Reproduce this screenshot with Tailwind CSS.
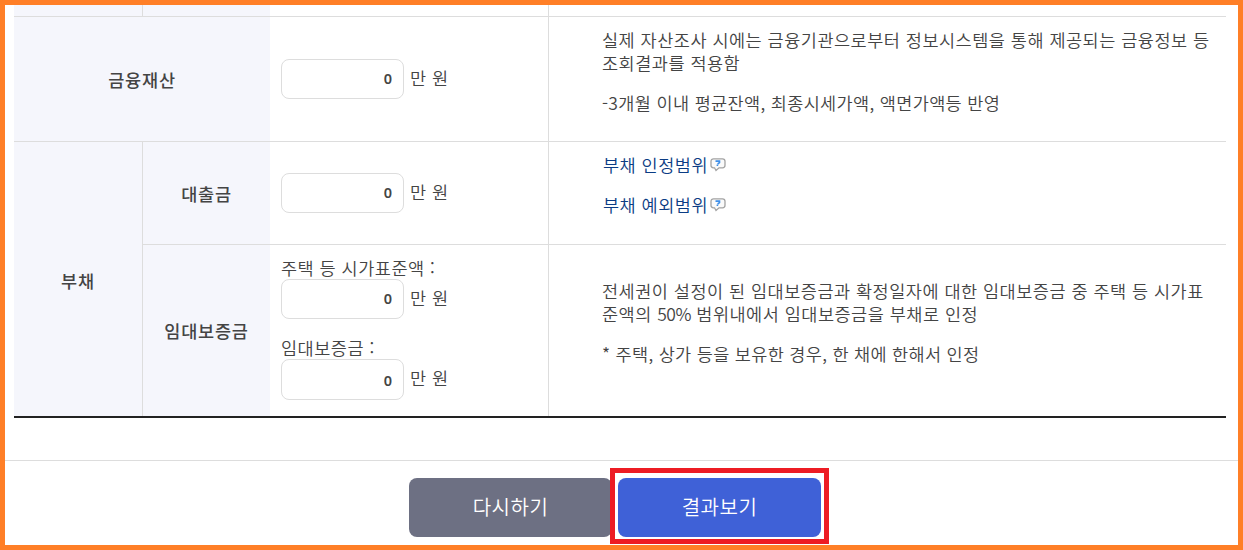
<!DOCTYPE html>
<html lang="ko">
<head>
    <meta charset="UTF-8">
    <meta name="viewport" content="width=device-width, initial-scale=1.0">
    <title>모의계산</title>
    <script src="https://cdn.jsdelivr.net/npm/@tailwindcss/browser@4"></script>
</head>
<body class="h-[550px] overflow-hidden border-5 border-[#ff7f27] bg-white font-['Noto_Sans_CJK_KR',sans-serif] text-[17.5px] leading-[23px] font-[350] tracking-[0.5px] text-[#444]">
    <!-- 재산 입력 표 -->
    <div class="ml-[9px] grid w-[1212px] grid-cols-[129px_127px_279px_677px] grid-rows-[12px_125px_103px_171px] border-b-2 border-[#222] whitespace-nowrap">
        <div class="border-r border-b border-[#ddd] bg-[#f5f6fc]"></div>
        <div class="border-b border-[#ddd] bg-[#f5f6fc]"></div>
        <div class="border-r border-b border-[#ddd]"></div>
        <div class="border-b border-[#ddd]"></div>

        <!-- 금융재산 -->
        <div class="col-span-2 flex items-center justify-center border-b border-[#ddd] bg-[#f5f6fc] font-medium tracking-[0.8px]">금융재산</div>
        <div class="flex items-center border-r border-b border-[#ddd] pl-[11px]">
            <input type="text" value="0" class="h-10 w-[123px] rounded-lg border border-[#ddd] pr-[11px] pb-0.5 text-right font-['Noto_Sans'] text-[14.5px] font-semibold tracking-normal">
            <span class="-mt-1 ml-1.5">만 원</span>
        </div>
        <div class="border-b border-[#ddd] pt-[11px] pl-[53px]">
            <p>실제 자산조사 시에는 금융기관으로부터 정보시스템을 통해 제공되는 금융정보 등<br>조회결과를 적용함</p>
            <p class="mt-[17px] tracking-[0.35px]">-3개월 이내 평균잔액, 최종시세가액, 액면가액등 반영</p>
        </div>

        <!-- 부채 -->
        <div class="row-span-2 flex items-center justify-center border-r border-[#ddd] bg-[#f5f6fc] pt-0.5 font-medium tracking-[0.8px]">부채</div>
        <div class="flex items-center justify-center border-b border-[#ddd] bg-[#f5f6fc] font-medium tracking-[0.8px]">대출금</div>
        <div class="flex items-center border-r border-b border-[#ddd] pl-[11px]">
            <input type="text" value="0" class="h-10 w-[123px] rounded-lg border border-[#ddd] pr-[11px] pb-0.5 text-right font-['Noto_Sans'] text-[14.5px] font-semibold tracking-normal">
            <span class="-mt-1 ml-1.5">만 원</span>
        </div>
        <div class="border-b border-[#ddd] pt-[11px] pl-[54px] text-[#0b3c84]">
            <p class="flex">부채 인정범위
                <svg class="mt-[5px] ml-0.5" width="16" height="14" viewBox="0 0 16 14" fill="none">
                    <path d="M3.500.8h9a2.500 2.500 0 0 1 2.500 2.500v4a2.500 2.500 0 0 1-2.500 2.500H9L6 12.500 4.500 9.800h-1A2.500 2.500 0 0 1 1 7.300v-4A2.500 2.500 0 0 1 3.500.8z" fill="#fafafa" stroke="#a3a3a3" stroke-width="1.300"/>
                    <path d="M5.500 3.100h4v1.600L7.600 6M7.400 6.600v1.500" stroke="#3f8fe8" stroke-width="1.600"/>
                </svg>
            </p>
            <p class="mt-[17px] flex">부채 예외범위
                <svg class="mt-[5px] ml-0.5" width="16" height="14" viewBox="0 0 16 14" fill="none">
                    <path d="M3.500.8h9a2.500 2.500 0 0 1 2.500 2.500v4a2.500 2.500 0 0 1-2.500 2.500H9L6 12.500 4.500 9.800h-1A2.500 2.500 0 0 1 1 7.300v-4A2.500 2.500 0 0 1 3.500.8z" fill="#fafafa" stroke="#a3a3a3" stroke-width="1.300"/>
                    <path d="M5.500 3.100h4v1.600L7.600 6M7.400 6.600v1.500" stroke="#3f8fe8" stroke-width="1.600"/>
                </svg>
            </p>
        </div>

        <!-- 임대보증금 -->
        <div class="flex items-center justify-center bg-[#f5f6fc] font-medium tracking-[0.8px]">임대보증금</div>
        <div class="border-r border-[#ddd] pt-[11px] pl-[11px]">
            <p>주택 등 시가표준액 :</p>
            <div class="flex items-center">
                <input type="text" value="0" class="h-10 w-[123px] rounded-lg border border-[#ddd] pr-[11px] pb-0.5 text-right font-['Noto_Sans'] text-[14.5px] font-semibold tracking-normal">
                <span class="-mt-1 ml-1.5">만 원</span>
            </div>
            <p class="mt-[17px]">임대보증금 :</p>
            <div class="flex items-center">
                <input type="text" value="0" class="h-[41px] w-[123px] rounded-lg border border-[#ddd] pr-[11px] text-right font-['Noto_Sans'] text-[14.5px] font-semibold tracking-normal">
                <span class="-mt-1 ml-1.5">만 원</span>
            </div>
        </div>
        <div class="pt-[34px] pl-[53px]">
            <p>전세권이 설정이 된 임대보증금과 확정일자에 대한 임대보증금 중 주택 등 시가표<br>준액의 <span class="tracking-[-0.5px]">50%</span> 범위내에서 임대보증금을 부채로 인정</p>
            <p class="mt-[17px] tracking-[0.32px]">* 주택, 상가 등을 보유한 경우, 한 채에 한해서 인정</p>
        </div>
    </div>

    <!-- 버튼 -->
    <div class="mt-[42px] flex border-t border-[#ddd] pt-[7px] pl-[404px] text-[20px] text-white">
        <button class="mt-2.5 h-[59px] w-[203px] rounded-lg bg-[#6d7083] pb-0.5">다시하기</button>
        <div class="relative -ml-0.5 h-[76px] w-[219px] border-5 border-[#ed1c24] bg-white p-[3px] pt-[5px]">
            <button class="h-[59px] w-[203px] rounded-lg bg-[#3f61d7] pb-0.5">결과보기</button>
        </div>
    </div>
</body>
</html>
